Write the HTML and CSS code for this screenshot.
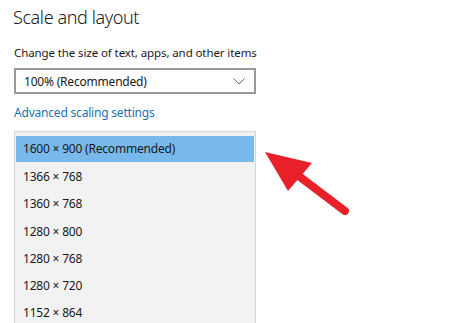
FILE: index.html
```html
<!DOCTYPE html>
<html lang="en">
<head>
    <meta charset="UTF-8">
    <title>Scale and layout</title>
    <link rel="stylesheet" href="styles.css">
</head>
<body>
    <div class="page">
        <h1 class="title">Scale and layout</h1>
        <p class="label">Change the size of text, apps, and other items</p>

        <div class="combo">
            <span>100% (Recommended)</span>
            <svg class="chevron" width="12" height="7" viewBox="0 0 12 7">
                <polyline points="0.5,0.5 6,6 11.5,0.5" fill="none" stroke="#666" stroke-width="1"/>
            </svg>
        </div>

        <a class="link" href="#">Advanced scaling settings</a>

        <!-- Resolution dropdown, opened -->
        <ul class="list">
            <li class="item selected">1600 × 900 (Recommended)</li>
            <li class="item">1366 × 768</li>
            <li class="item">1360 × 768</li>
            <li class="item">1280 × 800</li>
            <li class="item">1280 × 768</li>
            <li class="item">1280 × 720</li>
            <li class="item">1152 × 864</li>
        </ul>
    </div>

    <svg class="arrow" width="100" height="80" viewBox="0 0 100 80">
        <line x1="35" y1="28" x2="80" y2="62" stroke="#e8202a" stroke-width="8" stroke-linecap="round"/>
        <polygon points="0,3 47,14 23,42" fill="#e8202a"/>
    </svg>
</body>
</html>
```

FILE: styles.css
```css
body {
    margin: 0;
    background-color: #ffffff;
    font-family: "Noto Sans", "Open Sans", sans-serif;
    color: #1a1a1a;
    height: 323px;
    overflow: hidden;
}

.page {
    padding: 6px 0 0 14px;
    width: 300px;
}

.title {
    margin: 0 0 0 -1px;
    font-size: 18px;
    font-weight: 300;
    line-height: 22px;
    letter-spacing: -0.4px;
}

.label {
    margin: 17px 0 0 0;
    font-size: 11.5px;
    line-height: 16px;
    letter-spacing: -0.1px;
    white-space: nowrap;
}

.combo {
    box-sizing: border-box;
    margin-top: 7px;
    height: 26px;
    width: 242px;
    border: 2px solid #999;
    display: flex;
    align-items: center;
    justify-content: space-between;
    padding: 0 9px 0 8px;
    font-size: 12px;
    letter-spacing: -0.2px;
}

.link {
    display: block;
    margin-top: 11px;
    font-size: 12px;
    line-height: 16px;
    letter-spacing: -0.2px;
    color: #1773b0;
    text-decoration: none;
}

.list {
    list-style: none;
    margin: 10px 0 0 0;
    padding: 4px 1px 0 1px;
    width: 242px;
    box-sizing: border-box;
    background-color: #f2f2f2;
    border: 1px solid #d6d6d6;
    border-bottom: none;
}

.item {
    height: 27.3px;
    line-height: 27px;
    padding-left: 7px;
    font-size: 12px;
    letter-spacing: -0.2px;
}

.item.selected {
    background-color: #79b8ea;
    height: 26px;
    line-height: 26px;
    margin-bottom: 1px;
}

/* red pointer arrow over the screenshot */
.arrow {
    position: absolute;
    left: 265px;
    top: 149px;
}
```
